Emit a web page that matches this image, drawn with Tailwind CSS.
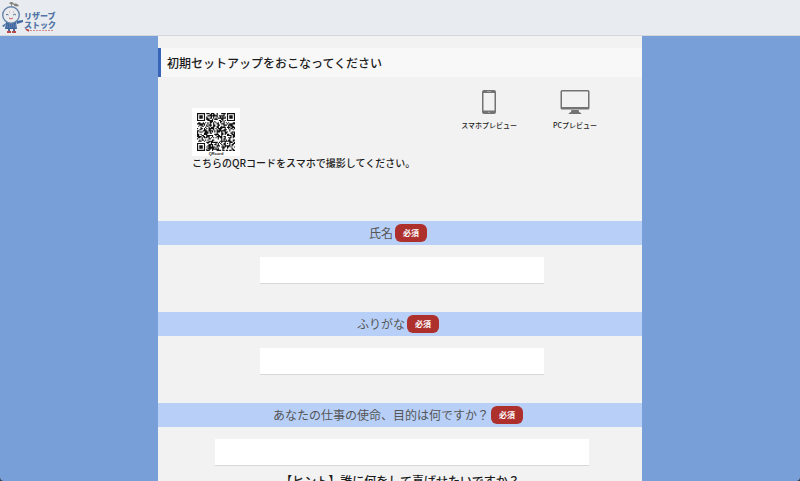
<!DOCTYPE html>
<html lang="ja">
<head>
<meta charset="utf-8">
<meta name="viewport" content="width=device-width, initial-scale=1">
<title>リザーブストック 初期セットアップ</title>
<script src="https://cdn.jsdelivr.net/npm/@tailwindcss/browser@4"></script>
</head>
<body class="flex min-h-screen flex-col bg-[#799fd8] font-['Noto_Sans_CJK_JP',sans-serif] text-[#1c1c1c]">
<header class="flex h-9 shrink-0 items-start border-b border-[#d3d6da] bg-[#e8ecf1]">
  <a href="#" class="flex items-start pt-px" aria-label="リザーブストック">
    <svg class="h-8 w-6" viewBox="0 0 24 32" fill="none">
      <path d="M12 6C11 4 12 3 13 2" stroke="#77756f" stroke-width="1"/>
      <path d="M9 2C12 0 13 1 14 3C16 2 18 3 19 5C16 6 14 5 13 3C11 4 10 3 9 2Z" fill="#85817a"/>
      <path d="M6 21L16 21L17 28L5 28ZM6 22L2 25L4 26ZM16 20L23 19L23 21L17 23Z" fill="#3f669f"/>
      <circle cx="11" cy="14" r="8.300" fill="#e9ebee" stroke="#6784aa" stroke-width="1.4"/>
      <path d="M6 14Q7 12.500 8.500 14M13 14Q14.500 12.500 16 14" stroke="#4c6b98"/>
      <path d="M9 17Q11 19 13 17" stroke="#c65c58"/>
      <path d="M9 11H10M13 11H14" stroke="#d39b94"/>
      <path d="M9 28V30M14 28V30" stroke="#496b9b" stroke-width="2"/>
      <path d="M7 31H11M12 31H16" stroke="#bc4748" stroke-width="2"/>
      <path d="M7 24H16M7 26H16" stroke="#8ba4c7" stroke-width=".7" stroke-dasharray="1 1"/>
    </svg>
    <span class="flex flex-col pt-2.5 text-[8px] font-black text-[#5375a5]">
      <span class="leading-[9px]">リザーブ</span><span class="leading-[9px]">ストック</span>
      <svg class="h-1 w-8" viewBox="0 0 32 4" fill="none"><path d="M2 0L5 2" stroke="#bd4548" stroke-width="2"/><path d="M6 1.500H29" stroke="#cf8989" stroke-dasharray="2 1"/></svg>
    </span>
  </a>
</header>

<main class="mx-auto w-full max-w-[484px] grow bg-[#f2f2f2] pt-3">
  <h1 class="border-l-3 border-[#3763b8] bg-[#f8f8f8] pl-1.5 text-[12px] leading-[29px] font-medium">初期セットアップをおこなってください</h1>

  <section class="flex h-36 items-start justify-between pr-[45px] pl-[34px]">
    <div class="pt-[31px]">
      <svg class="h-12 w-12 bg-white" viewBox="0 0 48 48" role="img" aria-label="QRコード">
        <path id="qr" fill="#111" transform="translate(5 5) scale(1.152)"/>
        <text x="24" y="47" text-anchor="middle" font-size="4" font-weight="bold" font-family="Liberation Sans, sans-serif" fill="#222">QRcord</text>
      </svg>
      <p class="text-[10px] leading-[14px] font-medium">こちらのQRコードをスマホで撮影してください。</p>
    </div>
    <nav class="flex gap-9 pt-3 text-[7px] leading-[10px] font-medium" aria-label="プレビュー">
      <a href="#" class="flex flex-col items-center gap-[5px]">
        <svg class="h-[26px] w-4" viewBox="0 0 16 26"><path fill="#737373" fill-rule="evenodd" d="M3 1H13Q15 1 15 3V23Q15 25 13 25H3Q1 25 1 23V3Q1 1 3 1ZM2.500 4V21.500H13.500V4Z"/><path d="M6 2.500H10M7 23.300H9" stroke="#bbb" stroke-width=".7"/></svg>
        <span>スマホプレビュー</span>
      </a>
      <a href="#" class="flex flex-col items-center gap-[5px]">
        <svg class="h-[26px] w-[30px]" viewBox="0 0 30 26"><path fill="#737373" fill-rule="evenodd" d="M2 1H28Q29.500 1 29.500 2.500V19Q29.500 20.500 28 20.500H2Q.5 20.500 .5 19V2.500Q.5 1 2 1ZM2 2.500V18H28V2.500ZM11.500 20H18.500L19 23Q21 23.500 21.500 25H8.500Q9 23.500 11 23Z"/></svg>
        <span>PCプレビュー</span>
      </a>
    </nav>
  </section>

  <form class="text-[12px] text-[#555]">
    <div class="pb-7">
      <label for="name" class="flex h-6 items-center justify-center gap-0.5 bg-[#b8d0f8] pr-1">氏名 <span class="rounded-md bg-[#ad302d] px-2 text-[8px] leading-[18px] font-bold text-white">必須</span></label>
      <div class="pt-3 pl-1"><input id="name" type="text" class="mx-auto block h-[27px] w-[59%] border-b border-[#d8d8d8] bg-white px-2 outline-none"></div>
    </div>
    <div class="pb-7">
      <label for="kana" class="flex h-6 items-center justify-center gap-0.5 bg-[#b8d0f8] pr-1">ふりがな <span class="rounded-md bg-[#ad302d] px-2 text-[8px] leading-[18px] font-bold text-white">必須</span></label>
      <div class="pt-3 pl-1"><input id="kana" type="text" class="mx-auto block h-[27px] w-[59%] border-b border-[#d8d8d8] bg-white px-2 outline-none"></div>
    </div>
    <div class="pb-7">
      <label for="mission" class="flex h-6 items-center justify-center gap-0.5 bg-[#b8d0f8] pr-1">あなたの仕事の使命、目的は何ですか？ <span class="rounded-md bg-[#ad302d] px-2 text-[8px] leading-[18px] font-bold text-white">必須</span></label>
      <div class="pt-3 pl-1"><input id="mission" type="text" aria-describedby="hint" class="mx-auto block h-[27px] w-[78%] border-b border-[#d8d8d8] bg-white px-2 outline-none"></div>
      <p id="hint" class="pt-1.5 text-center leading-[18px] font-medium text-[#1c1c1c]">【ヒント】誰に何をして喜ばせたいですか？</p>
    </div>
  </form>
</main>

<!-- Rounded window corners -->
<svg class="pointer-events-none fixed bottom-0 left-0 h-1 w-1" viewBox="0 0 4 4" aria-hidden="true"><path d="M0 0Q0 4 4 4H0Z" fill="#333941"/></svg>
<svg class="pointer-events-none fixed right-0 bottom-0 h-1 w-1" viewBox="0 0 4 4" aria-hidden="true"><path d="M4 0Q4 4 0 4H4Z" fill="#333941"/></svg>

<script>
// Fill the 33-module code: three finder squares, one alignment square, data modules.
const n = 33;
let seed = 41, d = '';
const ring = (x, y, size) => {
  const m = Math.max(Math.abs(x - (size - 1) / 2), Math.abs(y - (size - 1) / 2));
  return size === 7 ? m !== 2 && m < 4 : m !== 1 && m < 3;
};
for (let y = 0; y < n; y++) for (let x = 0; x < n; x++) {
  seed = (seed * 1103515245 + 12345) % 2147483648;
  let on = (seed >> 16) % 100 < 54;
  if (x < 8 && y < 8) on = x < 7 && y < 7 && ring(x, y, 7);
  else if (x > n - 9 && y < 8) on = x > n - 8 && y < 7 && ring(x - n + 7, y, 7);
  else if (x < 8 && y > n - 9) on = x < 7 && y > n - 8 && ring(x, y - n + 7, 7);
  else if (x > 23 && x < 29 && y > 23 && y < 29) on = ring(x - 24, y - 24, 5);
  if (on) d += `M${x} ${y}h1v1h-1z`;
}
document.getElementById('qr').setAttribute('d', d);
</script>
</body>
</html>
